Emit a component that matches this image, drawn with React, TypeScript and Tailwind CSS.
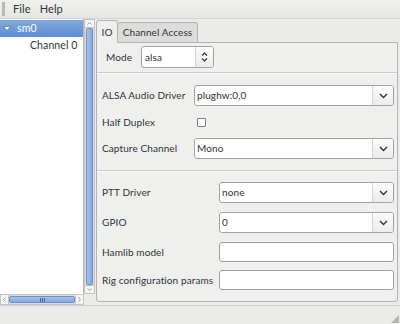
import React from 'react';

function ChevronDown({ className }: { className?: string }) {
  return (
    <svg width="9" height="6" viewBox="0 0 9 6" className={className}>
      <path d="M1 1 L4.5 4.5 L8 1" fill="none" stroke="#2e3436" strokeWidth="1.4" />
    </svg>
  );
}

function Combo({ value }: { value: string }) {
  return (
    <div className="flex h-[21px] flex-1 overflow-hidden rounded-[3px] border border-[#a3a3a3] bg-white">
      <span className="flex flex-1 items-center px-[2px]">{value}</span>
      <div className="flex w-[21px] items-center justify-center border-l border-[#d2d2d2] bg-gradient-to-b from-[#fbfbfb] to-[#ececec]">
        <ChevronDown />
      </div>
    </div>
  );
}

function Entry() {
  return <div className="h-[20px] flex-1 rounded-[3px] border border-[#a3a3a3] bg-white" />;
}

function Separator() {
  return <div className="h-[2px] border-t border-[#c9c9c9] bg-white/70" />;
}

export default function App() {
  return (
    <div className="flex h-[324px] w-[400px] flex-col overflow-hidden bg-[#ebebea] font-[Lato,sans-serif] text-[10px] tracking-[0.1px] text-[#2e3436]">
      {/* menu bar */}
      <div className="flex h-[19px] items-center border-b border-[#d4d4d3] bg-gradient-to-b from-[#f0f0ef] to-[#e6e6e5]">
        <div className="ml-[2px] h-[14px] w-[3px] bg-[radial-gradient(#b5b5b5_0.7px,transparent_0.8px)] bg-[length:2px_2px]" />
        <span className="ml-[8px] text-[11px]">File</span>
        <span className="ml-[9px] text-[11px]">Help</span>
      </div>

      <div className="flex h-[286px]">
        {/* left tree + scrollbars */}
        <div className="flex w-[95px] flex-col">
          <div className="flex h-[275px]">
            <div className="flex w-[84px] flex-col border-r border-[#b8b8b8] bg-white pt-[1px]">
              <div className="flex h-[17px] items-center bg-gradient-to-b from-[#80a8dc] to-[#5e8fd2] text-[10.5px] text-white">
                <svg width="8" height="5" viewBox="0 0 8 5" className="ml-[3px]">
                  <path d="M0.5 0.5 L7.5 0.5 L4 4.5 Z" fill="#ffffff" stroke="#3d5f8f" strokeWidth="0.6" />
                </svg>
                <span className="ml-[6px]">sm0</span>
              </div>
              <div className="flex h-[18px] items-center pl-[30px] text-[10.5px]">Channel 0</div>
            </div>
            <div className="flex w-[11px] flex-col border border-[#c4c4c4] bg-[#dcdcdb]">
              <div className="flex h-[8px] items-center justify-center border-b border-[#c4c4c4] bg-[#f4f4f4]">
                <svg width="5" height="3" viewBox="0 0 5 3">
                  <path d="M0.5 2.5 L2.5 0.5 L4.5 2.5" fill="none" stroke="#8a8a8a" strokeWidth="0.8" />
                </svg>
              </div>
              <div className="mx-[1px] flex-1 rounded-[2px] border border-[#6f93c8] bg-gradient-to-r from-[#a5c2e8] to-[#86aade]" />
              <div className="flex h-[8px] items-center justify-center border-t border-[#c4c4c4] bg-[#f4f4f4]">
                <svg width="5" height="3" viewBox="0 0 5 3">
                  <path d="M0.5 0.5 L2.5 2.5 L4.5 0.5" fill="none" stroke="#8a8a8a" strokeWidth="0.8" />
                </svg>
              </div>
            </div>
          </div>
          <div className="flex h-[11px] w-[84px] border border-[#c4c4c4] bg-[#dcdcdb]">
            <div className="flex w-[8px] items-center justify-center border-r border-[#c4c4c4] bg-[#f4f4f4]">
              <svg width="3" height="5" viewBox="0 0 3 5">
                <path d="M2.5 0.5 L0.5 2.5 L2.5 4.5" fill="none" stroke="#8a8a8a" strokeWidth="0.8" />
              </svg>
            </div>
            <div className="my-[1px] flex flex-1 items-center justify-center gap-[1px] rounded-[2px] border border-[#6f93c8] bg-gradient-to-b from-[#a5c2e8] to-[#86aade]">
              <div className="h-[4px] w-[1px] bg-[#4a6a9a]" />
              <div className="h-[4px] w-[1px] bg-[#4a6a9a]" />
              <div className="h-[4px] w-[1px] bg-[#4a6a9a]" />
            </div>
            <div className="flex w-[8px] items-center justify-center border-l border-[#c4c4c4] bg-[#f4f4f4]">
              <svg width="3" height="5" viewBox="0 0 3 5">
                <path d="M0.5 0.5 L2.5 2.5 L0.5 4.5" fill="none" stroke="#8a8a8a" strokeWidth="0.8" />
              </svg>
            </div>
          </div>
        </div>

        {/* notebook */}
        <div className="flex flex-1 flex-col pl-[1px] pr-[2px]">
          <div className="flex h-[23px] items-end">
            <div className="relative z-10 -mb-[1px] flex h-[23px] w-[22px] items-center justify-center rounded-t-[3px] border border-b-0 border-[#b4b4b4] bg-[#efefee]">
              IO
            </div>
            <div className="flex h-[20px] w-[80px] items-center justify-center rounded-t-[3px] border border-b-0 border-l-0 border-[#b4b4b4] bg-[#dcdcdb]">
              Channel Access
            </div>
          </div>
          <div className="flex h-[260px] flex-col rounded-b-[3px] border border-[#b4b4b4] bg-[#efefee]">
            <div className="flex items-center pl-[9px] pt-[3px]">
              <span className="w-[35px]">Mode</span>
              <div className="flex h-[22px] w-[73px] overflow-hidden rounded-[3px] border border-[#a3a3a3] bg-white">
                <span className="flex flex-1 items-center pl-[3px]">alsa</span>
                <div className="flex w-[18px] flex-col items-center justify-center gap-[2px] border-l border-[#d2d2d2] bg-gradient-to-b from-[#fbfbfb] to-[#ececec]">
                  <svg width="7" height="4" viewBox="0 0 7 4">
                    <path d="M1 3.5 L3.5 1 L6 3.5" fill="none" stroke="#2e3436" strokeWidth="1.2" />
                  </svg>
                  <svg width="7" height="4" viewBox="0 0 7 4">
                    <path d="M1 0.5 L3.5 3 L6 0.5" fill="none" stroke="#2e3436" strokeWidth="1.2" />
                  </svg>
                </div>
              </div>
            </div>
            <div className="mt-[4px]">
              <Separator />
            </div>

            <div className="mt-[11px] flex flex-col gap-[6px] pl-[5px] pr-[3px]">
              <div className="flex items-center">
                <span className="w-[92px]">ALSA Audio Driver</span>
                <Combo value="plughw:0,0" />
              </div>
              <div className="flex h-[20px] items-center">
                <span className="w-[92px]">Half Duplex</span>
                <div className="ml-[3px] h-[9px] w-[9px] rounded-[1px] border border-[#7d7d7d] bg-white" />
              </div>
              <div className="flex items-center">
                <span className="w-[92px]">Capture Channel</span>
                <Combo value="Mono" />
              </div>
            </div>

            <div className="mt-[11px]">
              <Separator />
            </div>

            <div className="mt-[10px] flex flex-col gap-[9px] pl-[5px] pr-[3px]">
              <div className="flex items-center">
                <span className="w-[117px]">PTT Driver</span>
                <Combo value="none" />
              </div>
              <div className="flex items-center">
                <span className="w-[117px]">GPIO</span>
                <Combo value="0" />
              </div>
              <div className="flex items-center">
                <span className="w-[117px]">Hamlib model</span>
                <Entry />
              </div>
              <div className="-mt-[1px] flex items-center">
                <span className="w-[117px]">Rig configuration params</span>
                <Entry />
              </div>
            </div>
          </div>
        </div>
      </div>

      {/* status bar */}
      <div className="relative h-[19px] border-t border-[#d0d0cf] bg-[#ebebea]">
        <div className="absolute bottom-[1px] right-[1px] h-[8px] w-[8px] bg-[radial-gradient(#b0b0b0_0.7px,transparent_0.8px)] bg-[length:2px_2px] [clip-path:polygon(100%_0,100%_100%,0_100%)]" />
      </div>
    </div>
  );
}
